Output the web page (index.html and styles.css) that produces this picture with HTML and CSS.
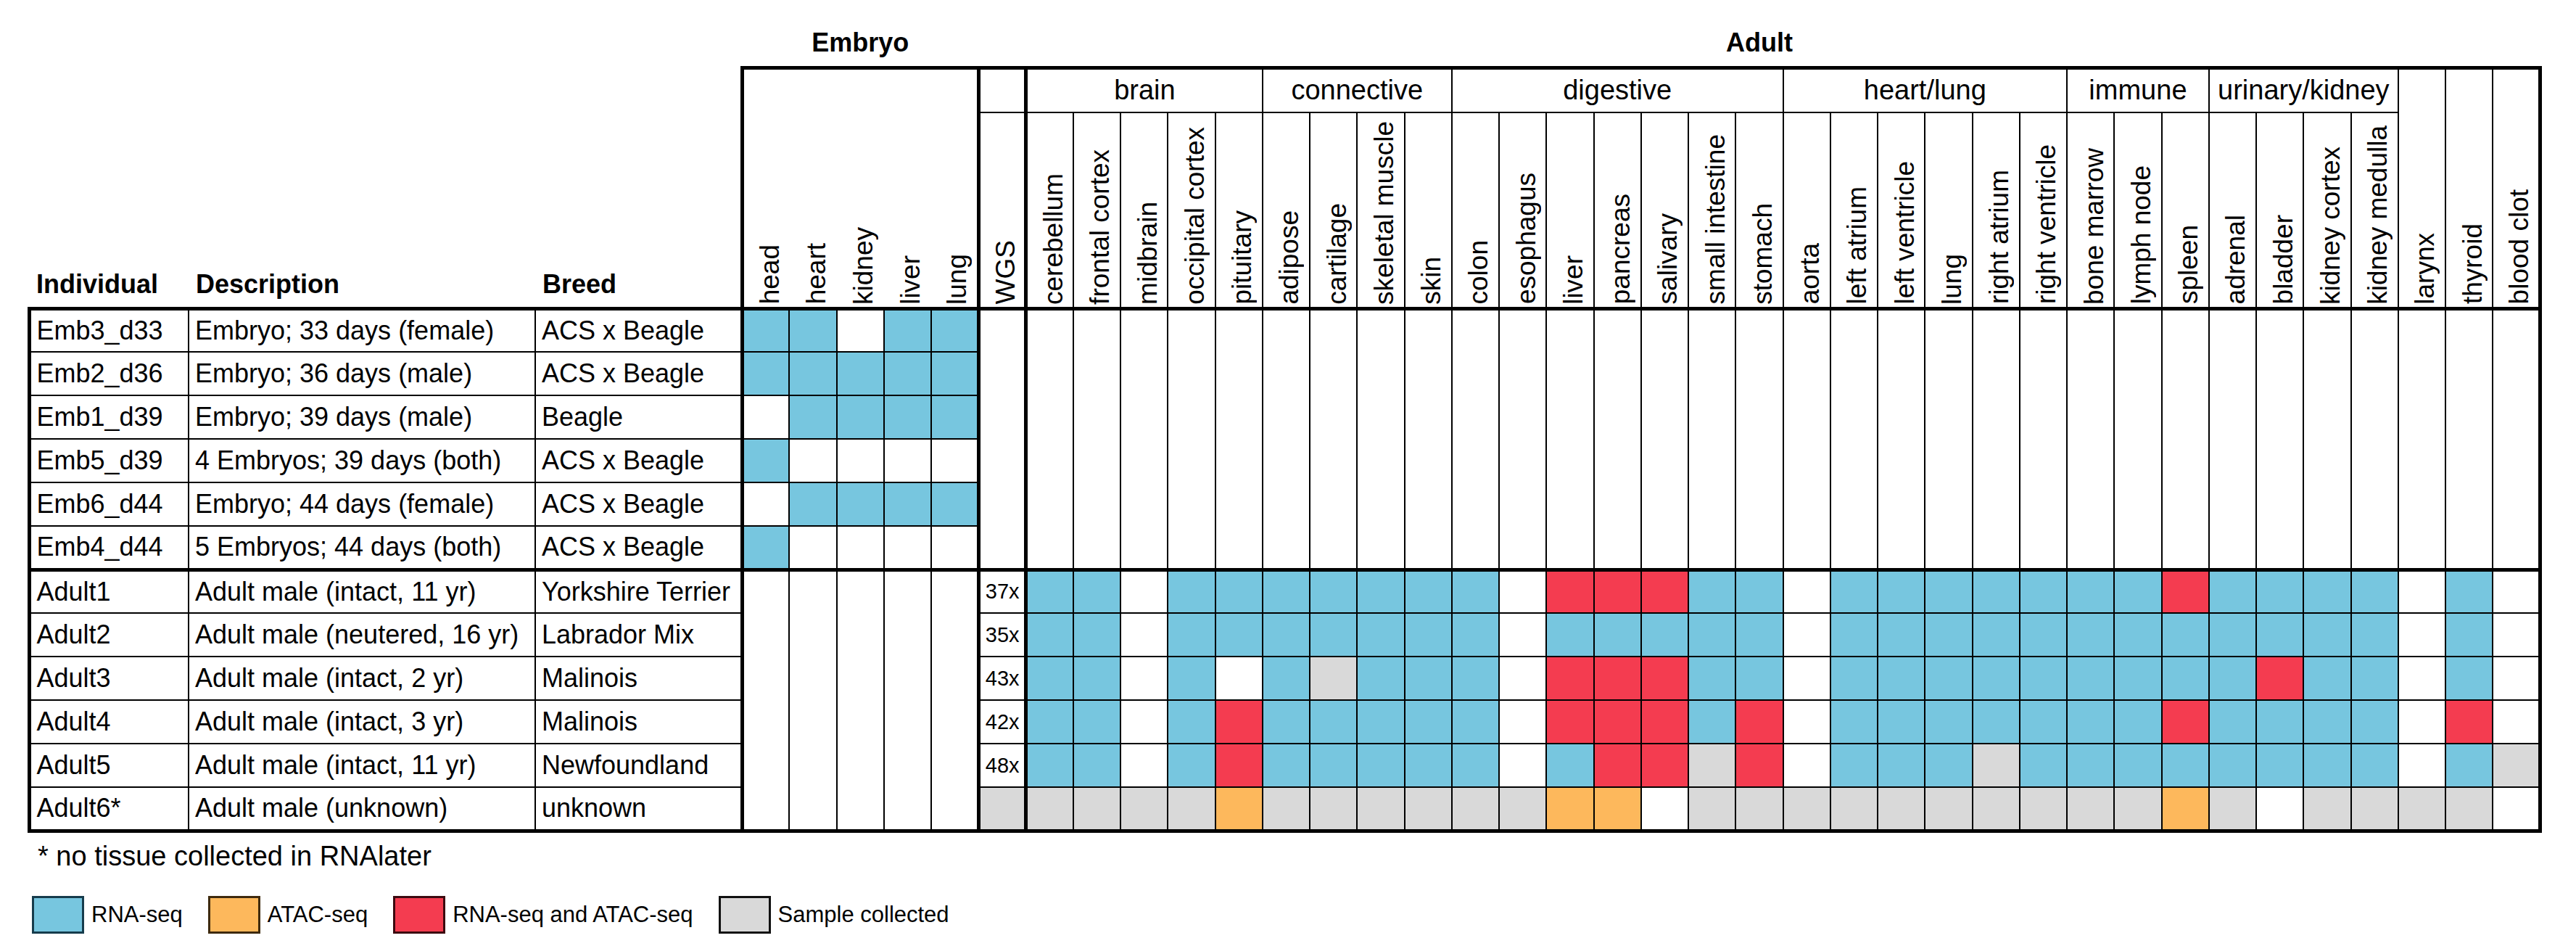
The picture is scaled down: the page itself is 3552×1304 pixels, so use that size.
FILE: index.html
```html
<!DOCTYPE html>
<html lang="en">
<head>
<meta charset="utf-8">
<title>Sample overview</title>
<link rel="stylesheet" href="styles.css">
</head>
<body>
<table class="grid">
<colgroup>
<col class="k1"><col class="k2"><col class="k3">
<col class="kt"><col class="kt"><col class="kt"><col class="kt"><col class="kt">
<col class="kt">
<col class="kt"><col class="kt"><col class="kt"><col class="kt"><col class="kt"><col class="kt"><col class="kt"><col class="kt">
<col class="kt"><col class="kt"><col class="kt"><col class="kt"><col class="kt"><col class="kt"><col class="kt"><col class="kt">
<col class="kt"><col class="kt"><col class="kt"><col class="kt"><col class="kt"><col class="kt"><col class="kt"><col class="kt">
<col class="kt"><col class="kt"><col class="kt"><col class="kt"><col class="kt"><col class="kt"><col class="kt"><col class="kt">
</colgroup>
<thead>
<tr class="rt"><th colspan="3"></th><th colspan="5" class="ttl">Embryo</th><th colspan="33" class="ttl">Adult</th></tr>
<tr class="ra">
<th rowspan="2" class="lh">Individual</th><th rowspan="2" class="lh">Description</th><th rowspan="2" class="lh">Breed</th>
<th rowspan="2" class="eh e1"><span class="vl">head</span></th>
<th rowspan="2" class="eh"><span class="vl">heart</span></th>
<th rowspan="2" class="eh"><span class="vl">kidney</span></th>
<th rowspan="2" class="eh"><span class="vl">liver</span></th>
<th rowspan="2" class="eh e5"><span class="vl">lung</span></th>
<th class="wg"></th>
<th colspan="5" class="grp">brain</th>
<th colspan="4" class="grp">connective</th>
<th colspan="7" class="grp">digestive</th>
<th colspan="6" class="grp">heart/lung</th>
<th colspan="3" class="grp">immune</th>
<th colspan="4" class="grp">urinary/kidney</th>
<th rowspan="2" class="sl tp"><span class="vl">larynx</span></th>
<th rowspan="2" class="sl tp"><span class="vl">thyroid</span></th>
<th rowspan="2" class="sl tp z"><span class="vl">blood clot</span></th>
</tr>
<tr class="rb">
<th class="wl"><span class="vl">WGS</span></th>
<th class="sl"><span class="vl">cerebellum</span></th>
<th class="sl"><span class="vl">frontal cortex</span></th>
<th class="sl"><span class="vl">midbrain</span></th>
<th class="sl"><span class="vl">occipital cortex</span></th>
<th class="sl"><span class="vl">pituitary</span></th>
<th class="sl"><span class="vl">adipose</span></th>
<th class="sl"><span class="vl">cartilage</span></th>
<th class="sl"><span class="vl">skeletal muscle</span></th>
<th class="sl"><span class="vl">skin</span></th>
<th class="sl"><span class="vl">colon</span></th>
<th class="sl"><span class="vl">esophagus</span></th>
<th class="sl"><span class="vl">liver</span></th>
<th class="sl"><span class="vl">pancreas</span></th>
<th class="sl"><span class="vl">salivary</span></th>
<th class="sl"><span class="vl">small intestine</span></th>
<th class="sl"><span class="vl">stomach</span></th>
<th class="sl"><span class="vl">aorta</span></th>
<th class="sl"><span class="vl">left atrium</span></th>
<th class="sl"><span class="vl">left ventricle</span></th>
<th class="sl"><span class="vl">lung</span></th>
<th class="sl"><span class="vl">right atrium</span></th>
<th class="sl"><span class="vl">right ventricle</span></th>
<th class="sl"><span class="vl">bone marrow</span></th>
<th class="sl"><span class="vl">lymph node</span></th>
<th class="sl"><span class="vl">spleen</span></th>
<th class="sl"><span class="vl">adrenal</span></th>
<th class="sl"><span class="vl">bladder</span></th>
<th class="sl"><span class="vl">kidney cortex</span></th>
<th class="sl"><span class="vl">kidney medulla</span></th>
</tr>
</thead>
<tbody>
<tr class="emb">
<td class="c1">Emb3_d33</td><td class="c2">Embryo; 33 days (female)</td><td class="c3">ACS x Beagle</td>
<td class="e e1 cb"></td><td class="e cb"></td><td class="e"></td><td class="e cb"></td><td class="e e5 cb"></td>
<td class="w"></td>
<td class="a"></td><td class="a"></td><td class="a"></td><td class="a"></td><td class="a"></td><td class="a"></td><td class="a"></td><td class="a"></td><td class="a"></td><td class="a"></td><td class="a"></td><td class="a"></td><td class="a"></td><td class="a"></td><td class="a"></td><td class="a"></td><td class="a"></td><td class="a"></td><td class="a"></td><td class="a"></td><td class="a"></td><td class="a"></td><td class="a"></td><td class="a"></td><td class="a"></td><td class="a"></td><td class="a"></td><td class="a"></td><td class="a"></td><td class="a"></td><td class="a"></td><td class="a z"></td>
</tr>
<tr class="emb">
<td class="c1">Emb2_d36</td><td class="c2">Embryo; 36 days (male)</td><td class="c3">ACS x Beagle</td>
<td class="e e1 cb"></td><td class="e cb"></td><td class="e cb"></td><td class="e cb"></td><td class="e e5 cb"></td>
<td class="w"></td>
<td class="a"></td><td class="a"></td><td class="a"></td><td class="a"></td><td class="a"></td><td class="a"></td><td class="a"></td><td class="a"></td><td class="a"></td><td class="a"></td><td class="a"></td><td class="a"></td><td class="a"></td><td class="a"></td><td class="a"></td><td class="a"></td><td class="a"></td><td class="a"></td><td class="a"></td><td class="a"></td><td class="a"></td><td class="a"></td><td class="a"></td><td class="a"></td><td class="a"></td><td class="a"></td><td class="a"></td><td class="a"></td><td class="a"></td><td class="a"></td><td class="a"></td><td class="a z"></td>
</tr>
<tr class="emb">
<td class="c1">Emb1_d39</td><td class="c2">Embryo; 39 days (male)</td><td class="c3">Beagle</td>
<td class="e e1"></td><td class="e cb"></td><td class="e cb"></td><td class="e cb"></td><td class="e e5 cb"></td>
<td class="w"></td>
<td class="a"></td><td class="a"></td><td class="a"></td><td class="a"></td><td class="a"></td><td class="a"></td><td class="a"></td><td class="a"></td><td class="a"></td><td class="a"></td><td class="a"></td><td class="a"></td><td class="a"></td><td class="a"></td><td class="a"></td><td class="a"></td><td class="a"></td><td class="a"></td><td class="a"></td><td class="a"></td><td class="a"></td><td class="a"></td><td class="a"></td><td class="a"></td><td class="a"></td><td class="a"></td><td class="a"></td><td class="a"></td><td class="a"></td><td class="a"></td><td class="a"></td><td class="a z"></td>
</tr>
<tr class="emb">
<td class="c1">Emb5_d39</td><td class="c2">4 Embryos; 39 days (both)</td><td class="c3">ACS x Beagle</td>
<td class="e e1 cb"></td><td class="e"></td><td class="e"></td><td class="e"></td><td class="e e5"></td>
<td class="w"></td>
<td class="a"></td><td class="a"></td><td class="a"></td><td class="a"></td><td class="a"></td><td class="a"></td><td class="a"></td><td class="a"></td><td class="a"></td><td class="a"></td><td class="a"></td><td class="a"></td><td class="a"></td><td class="a"></td><td class="a"></td><td class="a"></td><td class="a"></td><td class="a"></td><td class="a"></td><td class="a"></td><td class="a"></td><td class="a"></td><td class="a"></td><td class="a"></td><td class="a"></td><td class="a"></td><td class="a"></td><td class="a"></td><td class="a"></td><td class="a"></td><td class="a"></td><td class="a z"></td>
</tr>
<tr class="emb">
<td class="c1">Emb6_d44</td><td class="c2">Embryo; 44 days (female)</td><td class="c3">ACS x Beagle</td>
<td class="e e1"></td><td class="e cb"></td><td class="e cb"></td><td class="e cb"></td><td class="e e5 cb"></td>
<td class="w"></td>
<td class="a"></td><td class="a"></td><td class="a"></td><td class="a"></td><td class="a"></td><td class="a"></td><td class="a"></td><td class="a"></td><td class="a"></td><td class="a"></td><td class="a"></td><td class="a"></td><td class="a"></td><td class="a"></td><td class="a"></td><td class="a"></td><td class="a"></td><td class="a"></td><td class="a"></td><td class="a"></td><td class="a"></td><td class="a"></td><td class="a"></td><td class="a"></td><td class="a"></td><td class="a"></td><td class="a"></td><td class="a"></td><td class="a"></td><td class="a"></td><td class="a"></td><td class="a z"></td>
</tr>
<tr class="emb">
<td class="c1">Emb4_d44</td><td class="c2">5 Embryos; 44 days (both)</td><td class="c3">ACS x Beagle</td>
<td class="e e1 cb"></td><td class="e"></td><td class="e"></td><td class="e"></td><td class="e e5"></td>
<td class="w"></td>
<td class="a"></td><td class="a"></td><td class="a"></td><td class="a"></td><td class="a"></td><td class="a"></td><td class="a"></td><td class="a"></td><td class="a"></td><td class="a"></td><td class="a"></td><td class="a"></td><td class="a"></td><td class="a"></td><td class="a"></td><td class="a"></td><td class="a"></td><td class="a"></td><td class="a"></td><td class="a"></td><td class="a"></td><td class="a"></td><td class="a"></td><td class="a"></td><td class="a"></td><td class="a"></td><td class="a"></td><td class="a"></td><td class="a"></td><td class="a"></td><td class="a"></td><td class="a z"></td>
</tr>
<tr class="ad first">
<td class="c1">Adult1</td><td class="c2">Adult male (intact, 11 yr)</td><td class="c3">Yorkshire Terrier</td>
<td class="e e1"></td><td class="e"></td><td class="e"></td><td class="e"></td><td class="e e5"></td>
<td class="w">37x</td>
<td class="a cb"></td><td class="a cb"></td><td class="a"></td><td class="a cb"></td><td class="a cb"></td>
<td class="a cb"></td><td class="a cb"></td><td class="a cb"></td><td class="a cb"></td>
<td class="a cb"></td><td class="a"></td><td class="a cr"></td><td class="a cr"></td><td class="a cr"></td><td class="a cb"></td><td class="a cb"></td>
<td class="a"></td><td class="a cb"></td><td class="a cb"></td><td class="a cb"></td><td class="a cb"></td><td class="a cb"></td>
<td class="a cb"></td><td class="a cb"></td><td class="a cr"></td>
<td class="a cb"></td><td class="a cb"></td><td class="a cb"></td><td class="a cb"></td>
<td class="a"></td><td class="a cb"></td><td class="a z"></td>
</tr>
<tr class="ad">
<td class="c1">Adult2</td><td class="c2">Adult male (neutered, 16 yr)</td><td class="c3">Labrador Mix</td>
<td class="e e1"></td><td class="e"></td><td class="e"></td><td class="e"></td><td class="e e5"></td>
<td class="w">35x</td>
<td class="a cb"></td><td class="a cb"></td><td class="a"></td><td class="a cb"></td><td class="a cb"></td>
<td class="a cb"></td><td class="a cb"></td><td class="a cb"></td><td class="a cb"></td>
<td class="a cb"></td><td class="a"></td><td class="a cb"></td><td class="a cb"></td><td class="a cb"></td><td class="a cb"></td><td class="a cb"></td>
<td class="a"></td><td class="a cb"></td><td class="a cb"></td><td class="a cb"></td><td class="a cb"></td><td class="a cb"></td>
<td class="a cb"></td><td class="a cb"></td><td class="a cb"></td>
<td class="a cb"></td><td class="a cb"></td><td class="a cb"></td><td class="a cb"></td>
<td class="a"></td><td class="a cb"></td><td class="a z"></td>
</tr>
<tr class="ad">
<td class="c1">Adult3</td><td class="c2">Adult male (intact, 2 yr)</td><td class="c3">Malinois</td>
<td class="e e1"></td><td class="e"></td><td class="e"></td><td class="e"></td><td class="e e5"></td>
<td class="w">43x</td>
<td class="a cb"></td><td class="a cb"></td><td class="a"></td><td class="a cb"></td><td class="a"></td>
<td class="a cb"></td><td class="a cg"></td><td class="a cb"></td><td class="a cb"></td>
<td class="a cb"></td><td class="a"></td><td class="a cr"></td><td class="a cr"></td><td class="a cr"></td><td class="a cb"></td><td class="a cb"></td>
<td class="a"></td><td class="a cb"></td><td class="a cb"></td><td class="a cb"></td><td class="a cb"></td><td class="a cb"></td>
<td class="a cb"></td><td class="a cb"></td><td class="a cb"></td>
<td class="a cb"></td><td class="a cr"></td><td class="a cb"></td><td class="a cb"></td>
<td class="a"></td><td class="a cb"></td><td class="a z"></td>
</tr>
<tr class="ad">
<td class="c1">Adult4</td><td class="c2">Adult male (intact, 3 yr)</td><td class="c3">Malinois</td>
<td class="e e1"></td><td class="e"></td><td class="e"></td><td class="e"></td><td class="e e5"></td>
<td class="w">42x</td>
<td class="a cb"></td><td class="a cb"></td><td class="a"></td><td class="a cb"></td><td class="a cr"></td>
<td class="a cb"></td><td class="a cb"></td><td class="a cb"></td><td class="a cb"></td>
<td class="a cb"></td><td class="a"></td><td class="a cr"></td><td class="a cr"></td><td class="a cr"></td><td class="a cb"></td><td class="a cr"></td>
<td class="a"></td><td class="a cb"></td><td class="a cb"></td><td class="a cb"></td><td class="a cb"></td><td class="a cb"></td>
<td class="a cb"></td><td class="a cb"></td><td class="a cr"></td>
<td class="a cb"></td><td class="a cb"></td><td class="a cb"></td><td class="a cb"></td>
<td class="a"></td><td class="a cr"></td><td class="a z"></td>
</tr>
<tr class="ad">
<td class="c1">Adult5</td><td class="c2">Adult male (intact, 11 yr)</td><td class="c3">Newfoundland</td>
<td class="e e1"></td><td class="e"></td><td class="e"></td><td class="e"></td><td class="e e5"></td>
<td class="w">48x</td>
<td class="a cb"></td><td class="a cb"></td><td class="a"></td><td class="a cb"></td><td class="a cr"></td>
<td class="a cb"></td><td class="a cb"></td><td class="a cb"></td><td class="a cb"></td>
<td class="a cb"></td><td class="a"></td><td class="a cb"></td><td class="a cr"></td><td class="a cr"></td><td class="a cg"></td><td class="a cr"></td>
<td class="a"></td><td class="a cb"></td><td class="a cb"></td><td class="a cb"></td><td class="a cg"></td><td class="a cb"></td>
<td class="a cb"></td><td class="a cb"></td><td class="a cb"></td>
<td class="a cb"></td><td class="a cb"></td><td class="a cb"></td><td class="a cb"></td>
<td class="a"></td><td class="a cb"></td><td class="a z cg"></td>
</tr>
<tr class="ad last">
<td class="c1">Adult6*</td><td class="c2">Adult male (unknown)</td><td class="c3">unknown</td>
<td class="e e1"></td><td class="e"></td><td class="e"></td><td class="e"></td><td class="e e5"></td>
<td class="w cg"></td>
<td class="a cg"></td><td class="a cg"></td><td class="a cg"></td><td class="a cg"></td><td class="a co"></td>
<td class="a cg"></td><td class="a cg"></td><td class="a cg"></td><td class="a cg"></td>
<td class="a cg"></td><td class="a cg"></td><td class="a co"></td><td class="a co"></td><td class="a"></td><td class="a cg"></td><td class="a cg"></td>
<td class="a cg"></td><td class="a cg"></td><td class="a cg"></td><td class="a cg"></td><td class="a cg"></td><td class="a cg"></td>
<td class="a cg"></td><td class="a cg"></td><td class="a co"></td>
<td class="a cg"></td><td class="a"></td><td class="a cg"></td><td class="a cg"></td>
<td class="a cg"></td><td class="a cg"></td><td class="a z"></td>
</tr>
</tbody>
</table>
<p class="note">* no tissue collected in RNAlater</p>
<div class="legend">
<div class="li"><span class="sw sw-b"></span><span>RNA-seq</span></div>
<div class="li"><span class="sw sw-o"></span><span>ATAC-seq</span></div>
<div class="li"><span class="sw sw-r"></span><span>RNA-seq and ATAC-seq</span></div>
<div class="li"><span class="sw sw-g"></span><span>Sample collected</span></div>
</div>
</body>
</html>
```
FILE: styles.css
```css
html, body {
  margin: 0;
  padding: 0;
  background: #ffffff;
}
body {
  font-family: "Liberation Sans", Arial, Helvetica, sans-serif;
  color: #000;
  width: 3552px;
  height: 1304px;
  overflow: hidden;
}

.grid {
  border-collapse: collapse;
  table-layout: fixed;
  width: 3467.5px;
  margin-left: 37.5px;
  font-size: 36px;
}
.k1 { width: 220px; }
.k2 { width: 478px; }
.k3 { width: 285px; }
.kt { width: 65.25px; }

.grid th {
  padding: 0;
  border: none;
  font-weight: normal;
  white-space: nowrap;
}
.grid td {
  padding: 0;
  border: 2px solid #000;
  white-space: nowrap;
  overflow: hidden;
  vertical-align: middle;
}

/* header rows */
.rt { height: 93px; }
.ra { height: 62px; }
.rb { height: 270px; }

.ttl {
  font-weight: bold !important;
  text-align: center;
  vertical-align: bottom;
  padding-bottom: 11px !important;
}
.lh {
  font-weight: bold !important;
  text-align: left;
  vertical-align: bottom;
  padding: 0 0 10px 10px !important;
  border-bottom: 5px solid #000 !important;
}
.eh {
  border-top: 5px solid #000 !important;
  border-bottom: 5px solid #000 !important;
}
.eh.e1 { border-left: 5px solid #000 !important; }
.eh.e5 { border-right: 5px solid #000 !important; }
.wg {
  border-top: 5px solid #000 !important;
  border-left: 5px solid #000 !important;
  border-right: 5px solid #000 !important;
  border-bottom: 2px solid #000 !important;
}
.wl {
  border-left: 5px solid #000 !important;
  border-right: 5px solid #000 !important;
  border-bottom: 5px solid #000 !important;
}
.grp {
  font-size: 38px;
  text-align: center;
  vertical-align: middle;
  border-top: 5px solid #000 !important;
  border-left: 2px solid #000 !important;
  border-right: 2px solid #000 !important;
  border-bottom: 2px solid #000 !important;
}
.sl {
  border-left: 2px solid #000 !important;
  border-right: 2px solid #000 !important;
  border-bottom: 5px solid #000 !important;
}
.sl.tp { border-top: 5px solid #000 !important; }
.sl.z { border-right: 5px solid #000 !important; }

.eh, .wl, .sl {
  vertical-align: bottom;
  padding: 0 0 3px 10px !important;
}
.vl {
  display: block;
  writing-mode: vertical-rl;
  transform: rotate(180deg);
  white-space: nowrap;
  margin: 0 auto;
  font-size: 37px;
  text-align: start;
}

/* body cells */
.c1, .c2, .c3 { padding-left: 8px !important; }
.grid td.c1 { border-left: 5px solid #000; }
.grid td.e1 { border-left: 5px solid #000; }
.grid td.e5 { border-right: 5px solid #000; }
.grid td.w {
  border-left: 5px solid #000;
  border-right: 5px solid #000;
  font-size: 29px;
  padding-left: 7px;
}
.grid td.z { border-right: 5px solid #000; }

.grid tr.emb td.w,
.grid tr.emb td.a {
  border-top: none;
  border-bottom: none;
}
.grid tr.ad td.e {
  border-top: none;
  border-bottom: none;
}
.grid tr.emb,
.grid tr.ad { height: 60px; }

.grid tr.ad.first td { border-top: 5px solid #000; }
.grid tr.ad.last td { border-bottom: 5px solid #000; }

.cb { background: #77c6df; }
.cr { background: #f43c50; }
.co { background: #fdb85c; }
.cg { background: #d9d9d9; }

.note {
  margin: 11px 0 0 52px;
  font-size: 38px;
}

.legend {
  display: flex;
  align-items: center;
  gap: 35px;
  margin: 33px 0 0 44px;
  font-size: 31px;
}
.li {
  display: flex;
  align-items: center;
  gap: 10px;
}
.sw {
  display: block;
  box-sizing: border-box;
  width: 72px;
  height: 52px;
  border: 3px solid #111;
}
.sw-b { background: #77c6df; border-color: #163c4c; }
.sw-o { background: #fdb85c; border-color: #3e2a0e; }
.sw-r { background: #f43c50; border-color: #3c0a10; }
.sw-g { background: #d9d9d9; border-color: #111; }
```
